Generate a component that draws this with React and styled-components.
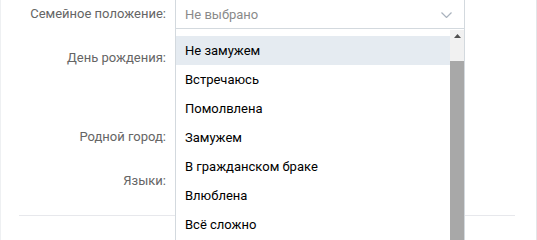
import styled, { createGlobalStyle } from 'styled-components'

const GlobalStyle = createGlobalStyle`
  body {
    margin: 0;
    background: #fff;
    font-family: Roboto, 'Open Sans', 'Liberation Sans', sans-serif;
    font-size: 13px;
  }
`

const statuses = [
  'Не замужем',
  'Встречаюсь',
  'Помолвлена',
  'Замужем',
  'В гражданском браке',
  'Влюблена',
  'Всё сложно',
]

const App = () => {
  return (
    <>
      <GlobalStyle />
      <Card>
        <Form>
          <Row>
            <Label>Семейное положение:</Label>
            <Field>
              <Select>
                <Placeholder>Не выбрано</Placeholder>
                <svg width='11' height='6' viewBox='0 0 11 6'>
                  <path d='M0.5 0.5l5 5 5-5' fill='none' stroke='#a9b2bd' strokeWidth='1.2' />
                </svg>
              </Select>
              <Dropdown>
                <List>
                  {statuses.map((s, i) => (
                    <Item key={s} active={i === 0}>
                      {s}
                    </Item>
                  ))}
                </List>
                <Scrollbar>
                  <ArrowButton>
                    <svg width='7' height='4' viewBox='0 0 7 4'>
                      <path d='M0 4L3.5 0 7 4z' fill='#505050' />
                    </svg>
                  </ArrowButton>
                  <Thumb />
                </Scrollbar>
              </Dropdown>
            </Field>
          </Row>
          <Row>
            <Label>День рождения:</Label>
            <Field>
              <Stack>
                <Inline>
                  <Select width='60px' />
                  <Select width='110px' />
                  <Select width='80px' />
                </Inline>
                <Select />
              </Stack>
            </Field>
          </Row>
          <Row>
            <Label>Родной город:</Label>
            <Field>
              <Select />
            </Field>
          </Row>
          <Row>
            <Label>Языки:</Label>
            <Field>
              <Select />
            </Field>
          </Row>
        </Form>
        <Separator />
      </Card>
    </>
  )
}

export default App

const Card = styled.div`
  width: 537px;
  height: 240px;
  box-sizing: border-box;
  border-left: 1px solid #eef0f2;
  border-right: 1px solid #e3e5e8;
  overflow: hidden;
`

const Form = styled.div`
  display: flex;
  flex-direction: column;
  gap: 14px;
  margin-top: -1px;
`

const Row = styled.div`
  display: grid;
  grid-template-columns: 165px 290px;
  column-gap: 9px;
  align-items: start;
`

const Label = styled.div`
  text-align: right;
  line-height: 30px;
  color: #656565;
  white-space: nowrap;
`

const Field = styled.div`
  position: relative;
`

const Stack = styled.div`
  display: flex;
  flex-direction: column;
  gap: 5px;
`

const Inline = styled.div`
  display: flex;
  gap: 8px;
`

const Select = styled.div`
  box-sizing: border-box;
  width: ${(p) => p.width || '100%'};
  height: 30px;
  border: 1px solid #d3d9de;
  background: #fff;
  padding: 0 9px;
  display: flex;
  align-items: center;
  justify-content: space-between;
  svg {
    margin-right: 3px;
    margin-top: 1px;
  }
`

const Placeholder = styled.span`
  color: #8a8a8a;
`

const Dropdown = styled.div`
  position: absolute;
  top: 100%;
  left: 0;
  width: 290px;
  height: 240px;
  box-sizing: border-box;
  border: 1px solid #d3d9de;
  border-top: none;
  background: #fff;
  display: flex;
  z-index: 10;
`

const List = styled.ul`
  flex: 1;
  list-style: none;
  margin: 0;
  padding: 7px 0 0;
`

const Item = styled.li`
  height: 29px;
  line-height: 29px;
  padding: 0 9px;
  color: #000;
  white-space: nowrap;
  background: ${(p) => (p.active ? '#e5ebf1' : '#fff')};
`

const Scrollbar = styled.div`
  width: 14px;
  margin-top: 1px;
  background: #f1f1f1;
  display: flex;
  flex-direction: column;
`

const ArrowButton = styled.div`
  height: 15px;
  display: flex;
  align-items: center;
  justify-content: center;
  svg {
    margin-top: -3px;
  }
`

const Thumb = styled.div`
  flex: 1;
  margin-top: 16px;
  background: #a8a8a8;
`

const Separator = styled.div`
  height: 1px;
  background: #e7e8ec;
  margin: 19px 21px 0 18px;
`
